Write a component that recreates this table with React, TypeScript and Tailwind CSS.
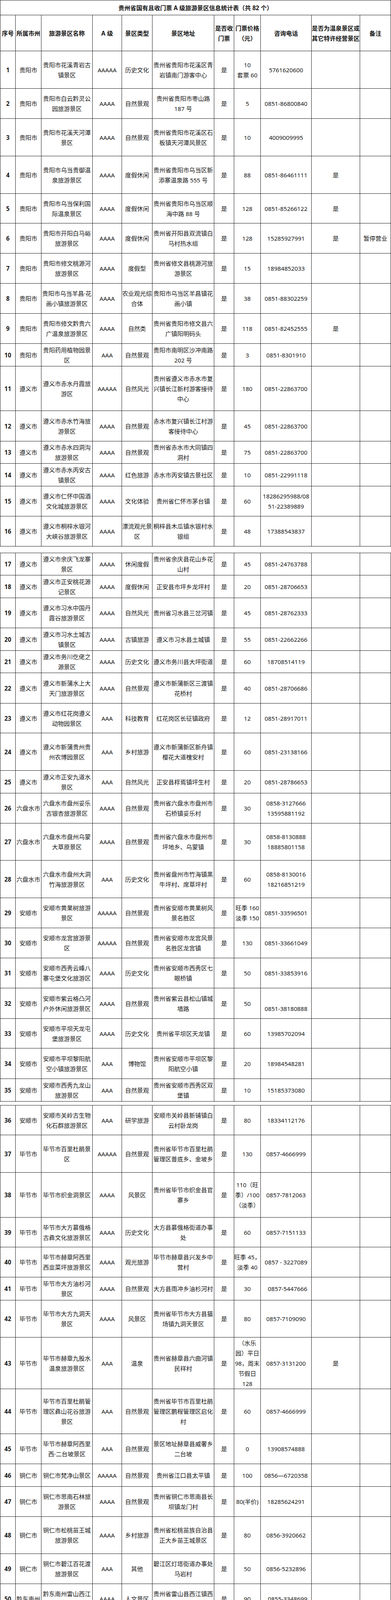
import React from 'react';

// 贵州省国有且收门票 A 级旅游景区信息统计表 — 5 page segments of one table

const COLS =
  'grid grid-cols-[39px_66px_131px_75px_78px_158px_51px_68px_130px_124px_79px]';

const H: Record<number, string> = {
  38: 'h-[38px]',
  57: 'h-[57px]',
  58: 'h-[58px]',
  59: 'h-[59px]',
  75: 'h-[75px]',
  76: 'h-[76px]',
  77: 'h-[77px]',
  78: 'h-[78px]',
  80: 'h-[80px]',
  92: 'h-[92px]',
  95: 'h-[95px]',
  96: 'h-[96px]',
  97: 'h-[97px]',
  114: 'h-[114px]',
  115: 'h-[115px]',
  116: 'h-[116px]',
  132: 'h-[132px]',
};

const GY = '贵阳市';
const ZY = '遵义市';
const LPS = '六盘水市';
const AS = '安顺市';
const BJ = '毕节市';
const TR = '铜仁市';
const QDN = '黔东南州';
const QN = '黔南州';
const QXN = '黔西南州';

// [height, city, name, level, type, address, price, phone, hotSpring?, note?, phoneClass?]
type Row = [number, string, string, string, string, string, string, string, string?, string?, string?];

const ROWS: Row[] = [
  [96, GY, '贵阳市花溪青岩古\n镇景区', 'AAAAA', '历史文化', '贵州省贵阳市花溪区青\n岩镇南门游客中心', '10\n套票 60', '5761620600'],
  [77, GY, '贵阳市白云黔灵公\n园旅游景区', 'AAAA', '自然景观', '贵州省贵阳市枣山路\n187 号', '5', '0851-86800840'],
  [96, GY, '贵阳市花溪天河潭\n景区', 'AAAA', '自然景观', '贵州省贵阳市花溪区石\n板镇天河潭风景区', '10', '4009009995'],
  [96, GY, '贵阳市乌当贵御温\n泉旅游景区', 'AAAA', '度假休闲', '贵州省贵阳市乌当区新\n添寨温泉路 555 号', '88', '0851-86461111', '是'],
  [76, GY, '贵阳市乌当保利国\n际温泉景区', 'AAAA', '度假休闲', '贵州省贵阳市乌当区顺\n海中路 88 号', '128', '0851-85266122', '是'],
  [77, GY, '贵阳市开阳白马峪\n旅游景区', 'AAAA', '度假休闲', '贵州省开阳县双流镇白\n马村热水组', '128', '15285927991', '是', '暂停营业'],
  [77, GY, '贵阳市修文桃源河\n旅游景区', 'AAAA', '度假型', '贵州省修文县桃源河旅\n游景区', '15', '18984852033'],
  [77, GY, '贵阳市乌当羊昌·花\n画小镇旅游景区', 'AAAA', '农业观光综\n合体', '贵阳市乌当区羊昌镇花\n画小镇', '38', '0851-88302259'],
  [77, GY, '贵阳市修文黔贵六\n广温泉旅游景区', 'AAAA', '自然类', '贵州省贵阳市修文县六\n广镇阳明码头', '118', '0851-82452555', '是'],
  [58, GY, '贵阳药用植物园景\n区', 'AAA', '自然景观', '贵阳市南明区沙冲南路\n202 号', '3', '0851-8301910'],
  [114, ZY, '遵义市赤水丹霞旅\n游区', 'AAAAA', '自然风光', '贵州省遵义市赤水市复\n兴镇长江新村游客接待\n中心', '180', '0851-22863700'],
  [78, ZY, '遵义市赤水竹海旅\n游景区', 'AAAA', '自然景观', '赤水市复兴镇长江村游\n客接待中心', '45', '0851-22863700'],
  [57, ZY, '遵义市赤水四洞沟\n旅游景区', 'AAAA', '自然景观', '贵州省赤水市大同镇四\n洞村', '75', '0851-22863700'],
  [58, ZY, '遵义市赤水丙安古\n镇景区', 'AAAA', '红色旅游', '赤水市丙安镇古景社区', '10', '0851-22991118'],
  [77, ZY, '遵义市仁怀中国酒\n文化城旅游景区', 'AAAA', '文化体验', '贵州省仁怀市茅台镇', '60', '18286295988/08\n51-22389889'],
  [77, ZY, '遵义市桐梓水银河\n大峡谷旅游景区', 'AAAA', '漂流观光景\n区', '桐梓县木瓜镇水银村水\n银组', '48', '17388543837'],

  [57, ZY, '遵义市余庆飞龙寨\n景区', 'AAAA', '休闲度假', '贵州省余庆县花山乡花\n山村', '45', '0851-24763788'],
  [58, ZY, '遵义市正安桃花源\n记景区', 'AAAA', '度假休闲', '正安县市坪乡龙坪村', '20', '0851-28706653'],
  [77, ZY, '遵义市习水中国丹\n霞谷旅游景区', 'AAAA', '自然风光', '贵州省习水县三岔河镇', '45', '0851-28762333'],
  [58, ZY, '遵义市习水土城古\n镇景区', 'AAAA', '古镇旅游', '遵义市习水县土城镇', '55', '0851-22662266'],
  [57, ZY, '遵义市务川仡佬之\n源景区', 'AAAA', '历史文化', '遵义市务川县大坪街道', '60', '18708514119'],
  [78, ZY, '遵义市新蒲水上大\n天门旅游景区', 'AAAA', '自然景观', '遵义市新蒲新区三渡镇\n花桥村', '40', '0851-28706686'],
  [76, ZY, '遵义市红花岗遵义\n动物园景区', 'AAA', '科技教育', '红花岗区长征镇政府', '12', '0851-28917011'],
  [96, ZY, '遵义市新蒲贵州贵\n州农博园景区', 'AAA', '乡村旅游', '遵义市新蒲新区新舟镇\n樱花大道槐安村', '60', '0851-23138166'],
  [58, ZY, '遵义市正安九道水\n景区', 'AAA', '自然风光', '正安县桴焉镇坪生村', '20', '0851-28786653'],
  [77, LPS, '六盘水市盘州妥乐\n古银杏旅游景区', 'AAAA', '自然景观', '贵州省六盘水市盘州市\n石桥镇妥乐村', '30', '0858-3127666\n13595881192'],
  [95, LPS, '六盘水市盘州乌蒙\n大草原景区', 'AAAA', '自然景观', '贵州省六盘水市盘州市\n坪地乡、乌蒙镇', '30', '0858-8130888\n18885801158'],
  [96, LPS, '六盘水市盘州大洞\n竹海旅游景区', 'AAA', '历史文化', '贵州省盘州市竹海镇黑\n牛坪村、席草坪村', '60', '0858-8130016\n18216851219'],
  [77, AS, '安顺市黄果树旅游\n景区', 'AAAAA', '自然景观', '贵州省安顺市黄果树风\n景名胜区', '旺季 160\n淡季 150', '0851-33596501'],
  [77, AS, '安顺市龙宫旅游景\n区', 'AAAAA', '自然景观', '贵州省安顺市龙宫风景\n名胜区龙宫镇', '130', '0851-33661049'],
  [77, AS, '安顺市西秀云峰八\n寨屯堡文化旅游区', 'AAAA', '历史文化', '贵州省安顺市西秀区七\n眼桥镇', '50', '0851-33853916'],
  [78, AS, '安顺市紫云格凸河\n户外休闲旅游景区', 'AAAA', '自然景观', '贵州省紫云县松山镇城\n墙路', '50', '\n0851-38180888'],
  [76, AS, '安顺市平坝天龙屯\n堡旅游景区', 'AAAA', '历史文化', '贵州省平坝区天龙镇', '60', '13985702094'],
  [78, AS, '安顺市平坝黎阳航\n空小镇旅游景区', 'AAA', '博物馆', '贵州省安顺市平坝区黎\n阳航空小镇', '20', '18984548281'],
  [58, AS, '安顺市西秀九龙山\n旅游景区', 'AAA', '自然景观', '贵州省安顺市西秀区双\n堡镇', '10', '15185373080'],

  [76, AS, '安顺市关岭古生物\n化石群旅游景区', 'AAA', '研学旅游', '安顺市关岭县新铺镇白\n云村卧龙岗', '80', '18334112176'],
  [96, BJ, '毕节市百里杜鹃景\n区', 'AAAAA', '自然景观', '贵州省毕节市百里杜鹃\n管理区普底乡、金坡乡', '130', '0857-4666999'],
  [115, BJ, '毕节市织金洞景区', 'AAAA', '风景区', '贵州省毕节市织金县官\n寨乡', '110（旺\n季）/100\n（淡季）', '0857-7812063'],
  [76, BJ, '毕节市大方慕俄格\n古彝文化旅游景区', 'AAAA', '历史文化', '大方县慕俄格街道办事\n处', '60', '0857-7151133'],
  [77, BJ, '毕节市赫章阿西里\n西韭菜坪旅游景区', 'AAAA', '观光旅游', '毕节市赫章县兴发乡中\n营村', '旺季 45，\n淡季 40', '0857 - 3227089'],
  [59, BJ, '毕节市大方油杉河\n景区', 'AAAA', '自然景观', '大方县雨冲乡油杉河村', '30', '0857-5447666', undefined, undefined, 'pl-[8px]'],
  [95, BJ, '毕节市大方九洞天\n景区', 'AAAA', '风景区', '贵州省毕节市大方县猫\n场镇九洞天景区', '80', '0857-7109090'],
  [132, BJ, '毕节市赫章九股水\n温泉旅游景区', 'AAA', '温泉', '贵州省赫章县六曲河镇\n民祥村', '（水乐\n园）平日\n98，周末\n节假日\n128', '0857-3131200', '是'],
  [115, BJ, '毕节市百里杜鹃管\n理区彝山花谷旅游\n景区', 'AAA', '自然景观', '贵州省毕节市百里杜鹃\n管理区鹏程管理区启化\n村', '60', '0857-4666999'],
  [77, BJ, '毕节市赫章阿西里\n西·二台坡景区', 'AAA', '自然景观', '景区地址赫章县威奢乡\n二台坡', '0', '13908574888'],
  [58, TR, '铜仁市梵净山景区', 'AAAAA', '自然景观', '贵州省江口县太平镇', '100', '0856—6720358'],
  [77, TR, '铜仁市思南石林旅\n游景区', 'AAAA', '自然景观', '贵州省铜仁市思南县长\n坝镇龙门村', '80(半价)', '18285624291'],
  [95, TR, '铜仁市松桃苗王城\n旅游景区', 'AAAA', '乡村旅游', '贵州省松桃苗族自治县\n正大乡苗王城景区', '80', '0856-3920662'],
  [77, TR, '铜仁市碧江百花渡\n旅游景区', 'AAA', '其他', '碧江区灯塔街道办事处\n马岩村', '50', '0856-5232896'],
  [77, QDN, '黔东南州雷山西江\n千户苗寨景区', 'AAAA', '人文景区', '贵州省雷山县西江镇西\n江村', '90', '0855-3348699', undefined, undefined, 'pl-[8px]'],
  [76, QDN, '黔东南州施秉云台\n山旅游景区', 'AAAA', '自然景观', '贵州省施秉县云台山', '80', '0855-3861116', undefined, undefined, 'pl-[22px]'],

  [75, QDN, '黔东南州黎平肇兴\n侗文化旅游景区', 'AAAA', '人文景区', '贵州省黎平县肇兴镇', '80', '0855-6130558/40\n0-6045666'],
  [97, QDN, '黔东南州施秉杉木\n河景区', 'AAAA', '自然景观', '贵州省施秉县城关镇潘\n家坝', '35', '0855-3861116', undefined, '漂流 150\n游船观光\n20'],
  [57, QDN, '黔东南州凯里下司\n古镇景区', 'AAAA', '古街区类', '贵州省凯里市下司镇', '90', '0855-6338619/18\n212420607'],
  [96, QDN, '黔东南州从江岜沙\n原生态苗族文化旅\n游景区', 'AAAA', '古村古镇', '贵州省从江县丙妹镇岜\n沙村', '40', '0855-6995225'],
  [77, QDN, '黔东南州雷山郎德\n旅游景区', 'AAAA', '人文景区', '贵州省雷山县郎德镇下\n郎德村', '50', '08552266552'],
  [77, QDN, '黔东南州镇远下㵲\n阳河旅游景区', 'AAAA', '自然风光', '贵州省镇远县舞阳镇舞\n阳公寓', '40', '0855-5719953', undefined, '游船观光\n100'],
  [76, QDN, '黔东南州黄平野洞\n河旅游景区', 'AAA', '暂停营业', '贵州省黄平县野洞河镇', '148', '13985818788', undefined, '暂停营业'],
  [78, QDN, '黔东南州镇远青龙\n洞景区', 'AAA', '历史文化', '贵州省镇远县舞阳镇西\n门街 26 号', '60', '0855-5721096'],
  [57, QDN, '黔东南州镇远高过\n河景区', 'AAA', '自然风光', '贵州省镇远县羊场镇三\n寨村', '40', '\n0855-5719953', undefined, '游船观光\n180'],
  [80, QN, '黔南州荔波樟江旅\n游景区', 'AAAAA', '自然景观', '贵州省荔波县樟江东路\n33 号', '淡季：\n100；旺\n季：120', '0854-3516116'],
  [77, QN, '黔南州平塘掌布“藏\n字石”景区', 'AAAA', '自然\n景观', '贵州省平塘县掌布镇桃\n坡村掌布景区', '70', '0854-7478298'],
  [115, QN, '黔南州都匀茶文化\n影视小镇景区', 'AAAA', '历史文化', '贵州省黔南州都匀经济\n开发区匀东镇中国茶文\n化博览园', '120', '0854-8810310'],
  [77, QN, '黔南州荔波瑶山古\n寨景区', 'AAAA', '乡村旅游', '贵州省荔波县瑶山瑶族\n乡拉片村', '80', '15270575672'],
  [76, QN, '黔南州都匀斗篷山\n景区', 'AAA', '自然景观', '贵州省都匀市河滨路江\n城 D 栋 14 楼', '40', '0854-8227807'],
  [96, QN, '黔南州龙里龙架山\n景区', 'AAA', '自然景观', '贵州省龙里县冠山社区\n三林路龙架山森林公园', '13.5', '0854-5620338'],
  [58, QN, '黔南州瓮安朱家山\n景区', 'AAA', '休闲度假', '贵州省瓮安县岚关乡', '10', '0854-2626315'],
  [76, QN, '黔南州罗甸高原千\n岛湖休闲旅游区', 'AAA', '度假休闲', '罗甸县龙坪镇和谐巷', '50', '13885433236'],

  [76, QN, '黔南州平塘甲茶景\n区', 'AAA', '自然\n景观', '贵州省黔南州平塘县甲\n茶镇甲茶村', '50', '15908543285'],
  [58, QN, '黔南州独山县天洞\n景区', 'AAA', '自然景观', '贵州省黔南州独山县基\n长镇', '80', '0854-8888868'],
  [77, QN, '黔南州长顺神泉谷\n休闲旅游区', 'AAA', '休闲度假', '长顺县长寨街道办事威\n远社区', '98', '0854-6921455'],
  [58, QN, '黔南州长顺杜鹃湖\n景区', 'AAA', '休闲度假', '长顺县杜鹃湖村', '30', '13984416706'],
  [76, QN, '黔南州独山奎文阁\n景区', 'AA', '历史文化', '贵州省独山县影山镇奎\n文阁景区', '80', '0854-3311253\n（门票预约电话）'],
  [96, QXN, '黔西南州兴义万峰\n林景区', 'AAAA', '乡村旅游', '贵州省兴义市万峰林街\n道办万峰林景区', '旺季 70/\n淡季 60', '0859-3342299'],
  [96, QXN, '黔西南州兴义马岭\n河峡谷景区', 'AAAA', '自然景观', '贵州省兴义市桔山街道\n办马岭河峡谷景区', '旺季 70/\n淡季 60', '0859-3646778', undefined, undefined, 'pl-[8px]'],
  [58, QXN, '黔西南州贞丰双乳\n峰景区', 'AAAA', '自然景观', '贵州省贞丰县珉谷镇顶\n肖村', '65', '18690710313'],
  [96, QXN, '黔西南州晴隆史迪\n威·24道拐旅游景区', 'AAAA', '历史文化', '贵州省黔西南晴隆县莲\n城街道南街社区', '60', '0859-7611100', undefined, undefined, 'pl-[22px]'],
  [116, QXN, '黔西南州贞丰三岔\n河旅游景区', 'AAAA', '度假休闲', '贵州省黔西南布依族苗\n族自治州贞丰县者相镇\n纳孔村', '30', '15086580982'],
  [80, QXN, '黔西南州兴义贵州\n醇景区', 'AAAA', '综合性山地\n旅游度假胜\n地', '黔西南州兴义市贵州醇\n新路 1 号', '60', '15117353883'],
  [77, QXN, '黔西南州安龙招堤\n旅游景区', 'AAAA', '历史文化', '安龙县招堤街道办事处\n招堤广场', '15', '0859-2213787'],
  [77, QXN, '黔西南州兴仁放马\n坪景区', 'AAAA', '自然景观', '兴仁市潘家庄和下山两\n镇交界处', '30', '18908594818'],
  [96, QXN, '黔西南州义龙云屯\n生态体育公园旅游\n景区', 'AAA', '度假休闲', '贵州省黔西南州义龙新\n区云屯生态体育公园', '20', '08593548888'],
];

// page segments: [first row index, end index, top gap class]
const SEGMENTS: [number, number, string][] = [
  [0, 16, ''],
  [16, 35, 'mt-[16px]'],
  [35, 51, 'mt-[9px]'],
  [51, 68, 'mt-[36px]'],
  [68, 82, 'mt-[68px]'],
];

function Cell({ children, className = '' }: { children?: React.ReactNode; className?: string }) {
  return (
    <div className={`flex min-w-0 items-center border-r border-[#1c1c1c] ${className}`}>
      <div className="w-full text-center whitespace-pre">{children}</div>
    </div>
  );
}

function HeaderRow() {
  return (
    <div className={`${COLS} h-[92px] border-b border-[#1c1c1c] font-bold`}>
      <Cell>序号</Cell>
      <Cell>所属市州</Cell>
      <Cell>旅游景区名称</Cell>
      <Cell>A 级</Cell>
      <Cell>景区类型</Cell>
      <Cell>景区地址</Cell>
      <Cell>{'是否收\n门票'}</Cell>
      <Cell>{'门票价格\n（元）'}</Cell>
      <Cell>咨询电话</Cell>
      <Cell>{'是否为温泉景区或\n其它特许经营景区'}</Cell>
      <Cell>备注</Cell>
    </div>
  );
}

function DataRow({ no, row }: { no: number; row: Row }) {
  const [h, city, name, level, type, addr, price, phone, hot, note, phoneCls] = row;
  return (
    <div className={`${COLS} ${H[h]} border-b border-[#1c1c1c]`}>
      <Cell className="font-bold">{no}</Cell>
      <Cell>{city}</Cell>
      <Cell>{name}</Cell>
      <Cell>{level}</Cell>
      <Cell>{type}</Cell>
      <Cell>{addr}</Cell>
      <Cell>是</Cell>
      <Cell>{price}</Cell>
      <Cell className={phoneCls ?? ''}>{phone}</Cell>
      <Cell>{hot}</Cell>
      <Cell>{note}</Cell>
    </div>
  );
}

export default function App() {
  return (
    <div className="w-[1000px] bg-white font-['Noto_Sans','Noto_Sans_CJK_SC',sans-serif] text-[15.25px] leading-[26px] text-[#161616]">
      {SEGMENTS.map(([start, end, gap], i) => (
        <div key={i} className={`w-[1000px] border-l border-t border-[#1c1c1c] ${gap}`}>
          {i === 0 && (
            <>
              <div className="flex h-[38px] items-center justify-center border-r border-b border-[#1c1c1c] font-bold">
                贵州省国有且收门票 A 级旅游景区信息统计表（共 82 个）
              </div>
              <HeaderRow />
            </>
          )}
          {ROWS.slice(start, end).map((row, j) => (
            <DataRow key={start + j} no={start + j + 1} row={row} />
          ))}
        </div>
      ))}
    </div>
  );
}
